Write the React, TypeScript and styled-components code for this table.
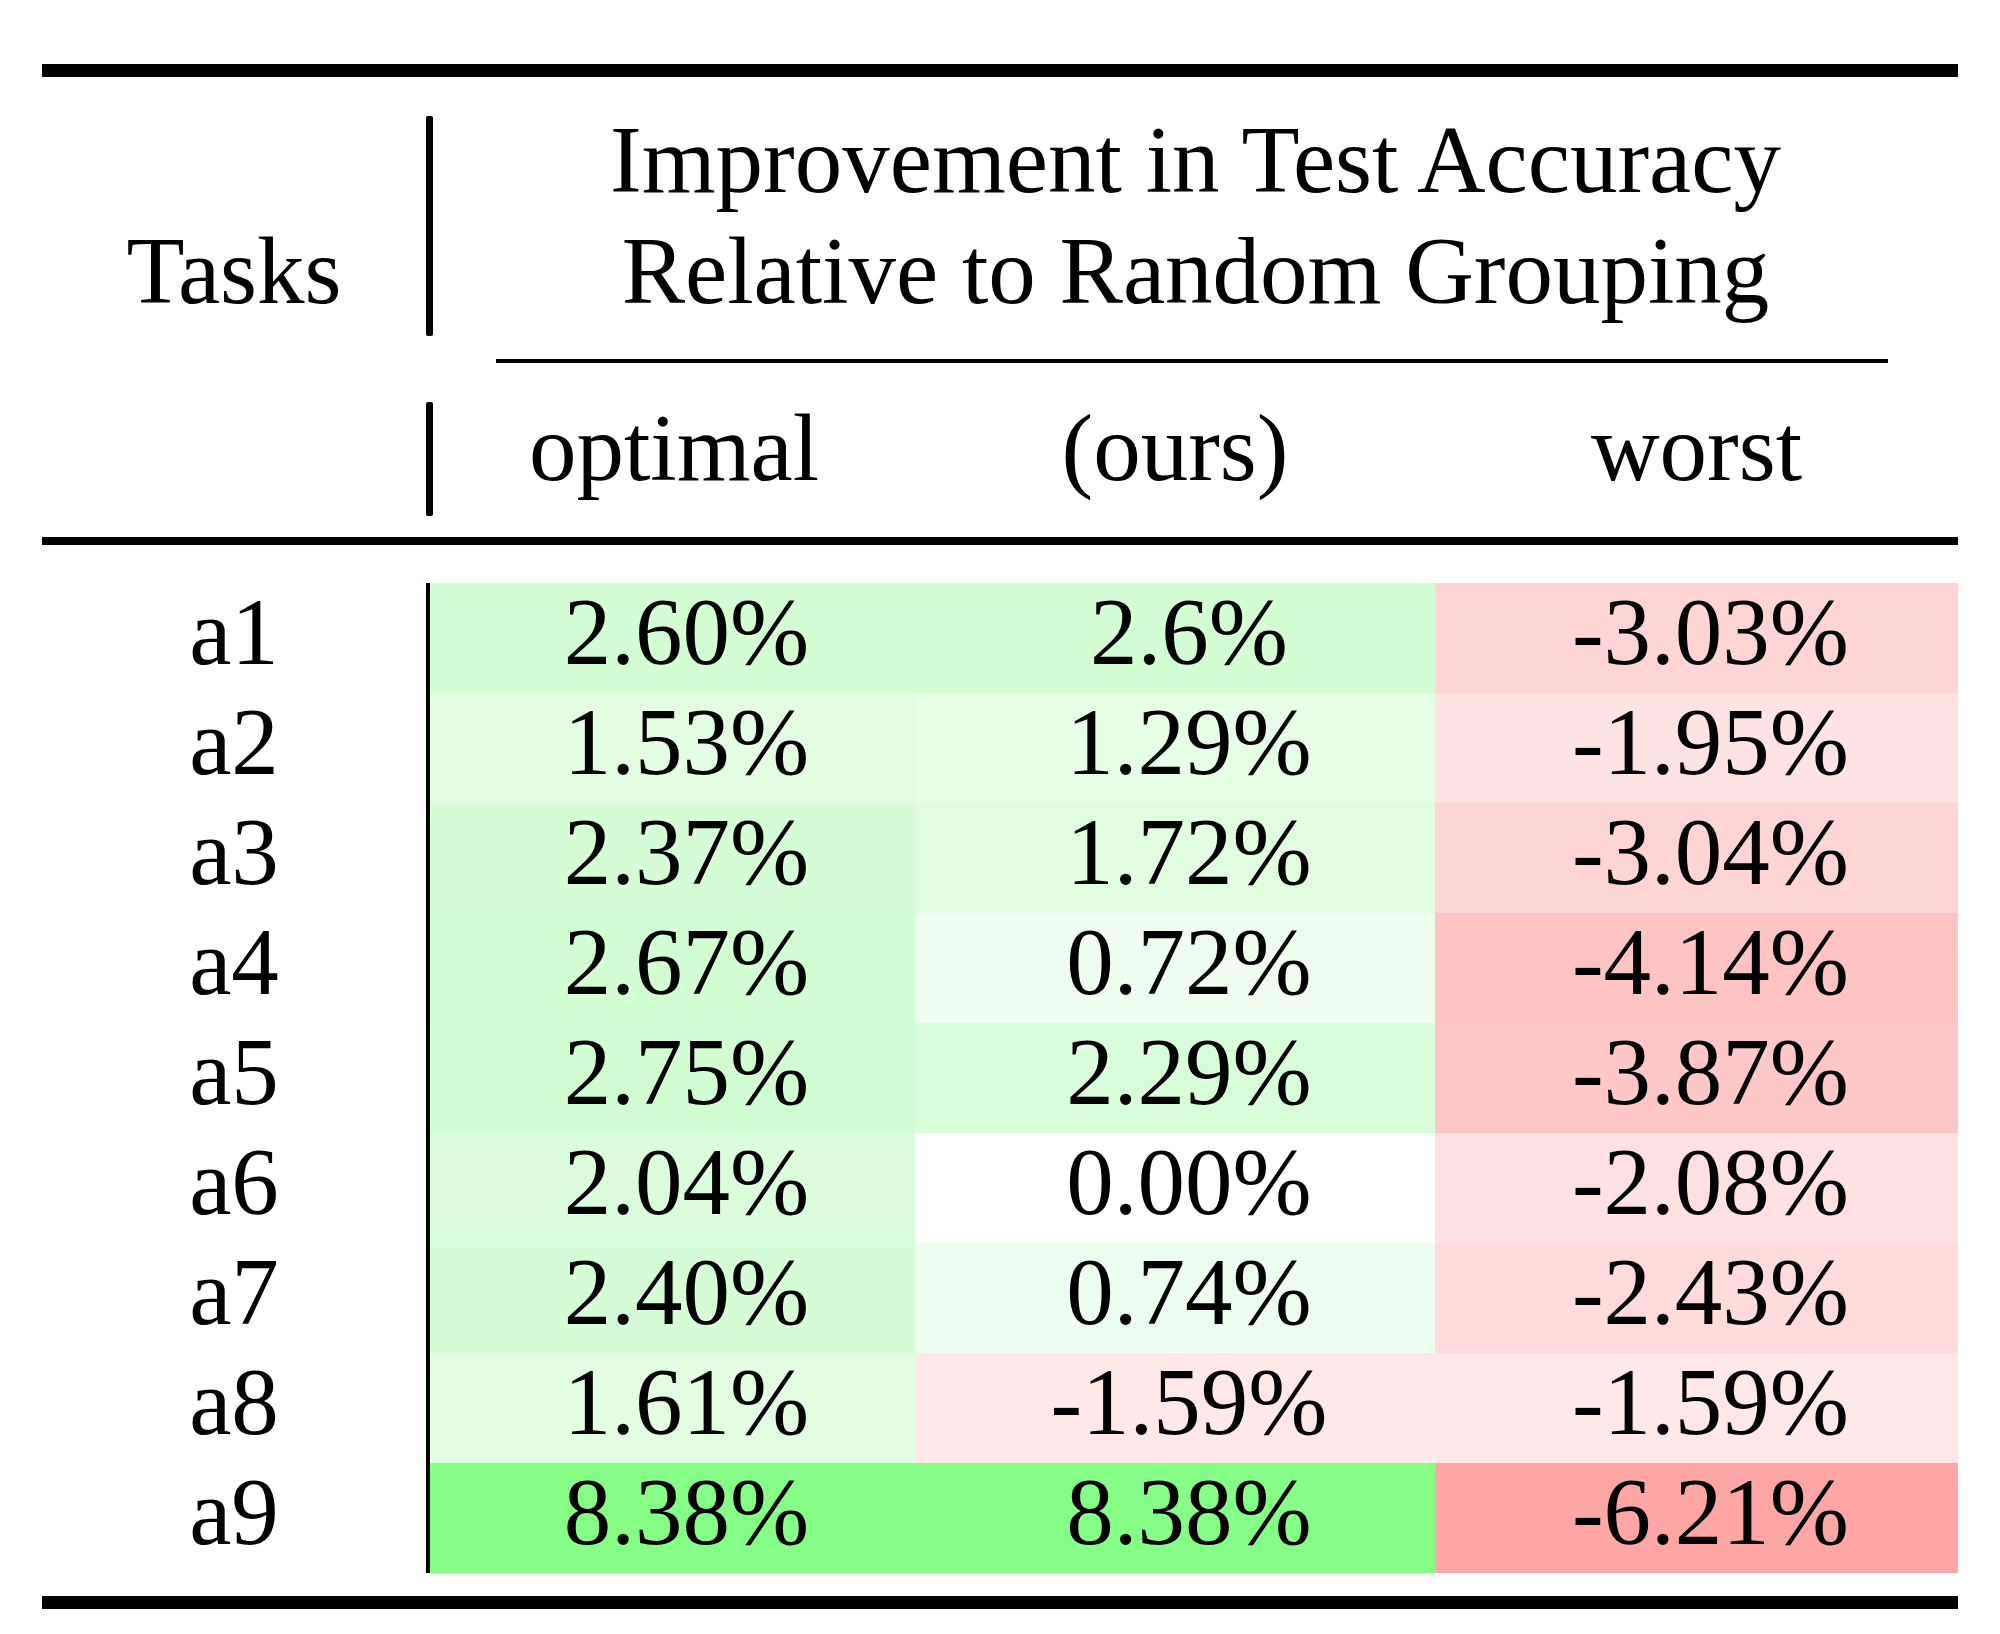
import React from "react";
import styled, { createGlobalStyle } from "styled-components";

const GlobalStyle = createGlobalStyle`
  html, body {
    margin: 0;
    padding: 0;
    background: #ffffff;
  }
  body {
    font-family: "Liberation Serif", "Times New Roman", serif;
    color: #000000;
  }
`;

const Page = styled.div`
  width: 2000px;
  height: 1634px;
  box-sizing: border-box;
  padding: 64px 42px 0;
  background: #ffffff;
`;

const Table = styled.div`
  width: 1916px;
  display: flex;
  flex-direction: column;
  font-size: 95px;
`;

const Rule = styled.div<{ $w: number; $mt?: number }>`
  height: ${(p) => p.$w}px;
  margin-top: ${(p) => p.$mt ?? 0}px;
  background: #000000;
`;

const HeaderGrid = styled.div`
  display: grid;
  grid-template-columns: 384px 7px 482px 520px 523px;
  grid-template-rows: 282px 4px 174px;
`;

const TasksCell = styled.div`
  grid-column: 1;
  grid-row: 1;
  padding-top: 139px;
  line-height: 111px;
  text-align: center;
`;

const VSegment = styled.div<{ $row: number; $top: number; $h: number }>`
  grid-column: 2;
  grid-row: ${(p) => p.$row};
  margin-top: ${(p) => p.$top}px;
  height: ${(p) => p.$h}px;
  background: #000000;
  border-radius: 2px;
`;

const GroupTitle = styled.div`
  grid-column: 3 / 6;
  grid-row: 1;
  padding-top: 28px;
  line-height: 111px;
  text-align: center;
`;

const CMidRule = styled.div`
  grid-column: 3 / 6;
  grid-row: 2;
  margin: 0 70px 0 63px;
  background: #000000;
`;

const SubLabel = styled.div<{ $col: number }>`
  grid-column: ${(p) => p.$col};
  grid-row: 3;
  padding-top: 30px;
  line-height: 111px;
  text-align: center;
`;

const Body = styled.div`
  margin-top: 38px;
  display: flex;
  flex-direction: column;
`;

const DataRow = styled.div`
  display: grid;
  grid-template-columns: 384px 4px 485px 520px 523px;
  height: 110px;
`;

const TaskLabel = styled.div`
  line-height: 98px;
  text-align: center;
`;

const VRuleCell = styled.div`
  background: #000000;
`;

const ValueCell = styled.div<{ $bg: string }>`
  background: ${(p) => p.$bg};
  line-height: 98px;
  text-align: center;
  box-sizing: border-box;
  padding-left: 28px;
`;

const rows: [string, string, string, string][] = [
  ["a1", "2.60%", "2.6%", "-3.03%"],
  ["a2", "1.53%", "1.29%", "-1.95%"],
  ["a3", "2.37%", "1.72%", "-3.04%"],
  ["a4", "2.67%", "0.72%", "-4.14%"],
  ["a5", "2.75%", "2.29%", "-3.87%"],
  ["a6", "2.04%", "0.00%", "-2.08%"],
  ["a7", "2.40%", "0.74%", "-2.43%"],
  ["a8", "1.61%", "-1.59%", "-1.59%"],
  ["a9", "8.38%", "8.38%", "-6.21%"],
];

function shade(text: string): string {
  const v = parseFloat(text);
  if (v > 0) {
    const t = Math.min(0.03 + v * 0.053, 1);
    const c = Math.round(255 - 255 * t);
    return `rgb(${c}, 253, ${c})`;
  }
  if (v < 0) {
    const t = Math.min(Math.abs(v) * 0.056, 1);
    const c = Math.round(255 - 255 * t);
    return `rgb(254, ${c}, ${c})`;
  }
  return "#ffffff";
}

export default function App() {
  return (
    <>
      <GlobalStyle />
      <Page>
        <Table>
          <Rule $w={13} />
          <HeaderGrid>
            <TasksCell>Tasks</TasksCell>
            <VSegment $row={1} $top={39} $h={220} />
            <GroupTitle>
              Improvement in Test Accuracy
              <br />
              Relative to Random Grouping
            </GroupTitle>
            <CMidRule />
            <VSegment $row={3} $top={39} $h={114} />
            <SubLabel $col={3}>optimal</SubLabel>
            <SubLabel $col={4}>(ours)</SubLabel>
            <SubLabel $col={5}>worst</SubLabel>
          </HeaderGrid>
          <Rule $w={8} />
          <Body>
            {rows.map(([task, a, b, c]) => (
              <DataRow key={task}>
                <TaskLabel>{task}</TaskLabel>
                <VRuleCell />
                <ValueCell $bg={shade(a)}>{a}</ValueCell>
                <ValueCell $bg={shade(b)}>{b}</ValueCell>
                <ValueCell $bg={shade(c)}>{c}</ValueCell>
              </DataRow>
            ))}
          </Body>
          <Rule $w={13} $mt={23} />
        </Table>
      </Page>
    </>
  );
}
